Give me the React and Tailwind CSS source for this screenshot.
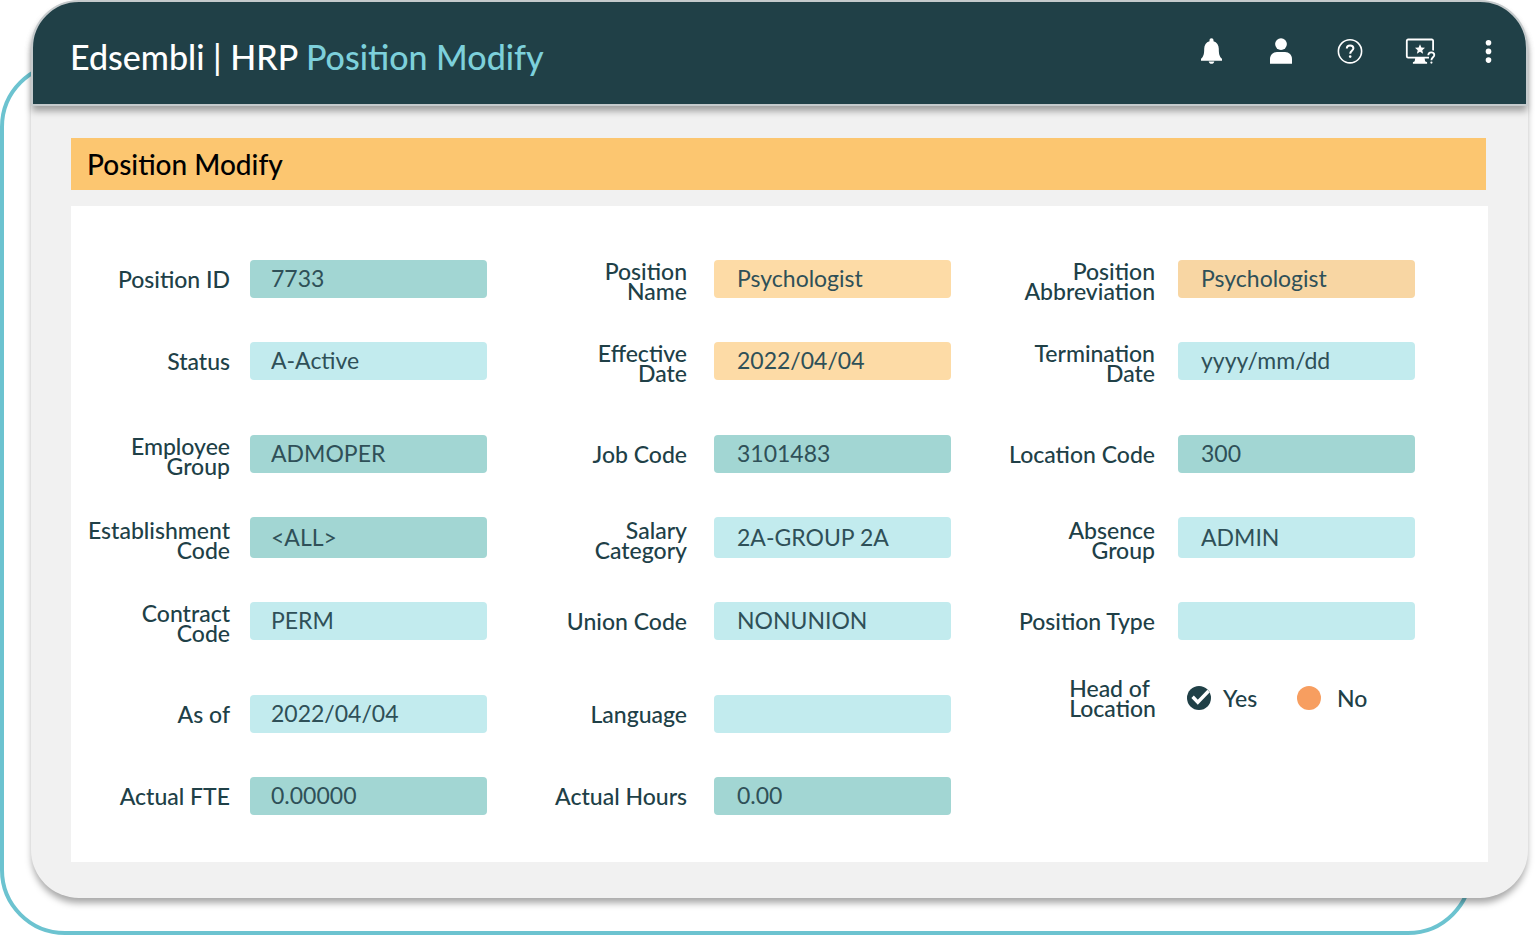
import React from "react";

const TONES = {
  locked: "bg-[#a2d6d3]",
  open: "bg-[#c2ebee]",
  required: "bg-[#fddba6]",
  muted: "bg-[#f8d6a3]",
};

const COLUMNS = [
  {
    labelGap: "gap-[20px]",
    inset: "pl-[21px]",
    fields: [
      { label: "Position ID", value: "7733", tone: "locked" },
      { label: "Status", value: "A-Active", tone: "open" },
      { label: "Employee Group", value: "ADMOPER", tone: "locked" },
      { label: "Establishment Code", value: "<ALL>", tone: "locked" },
      { label: "Contract Code", value: "PERM", tone: "open" },
      { label: "As of", value: "2022/04/04", tone: "open" },
      { label: "Actual FTE", value: "0.00000", tone: "locked" },
    ],
  },
  {
    labelGap: "gap-[27px]",
    inset: "pl-[23px]",
    fields: [
      { label: "Position Name", value: "Psychologist", tone: "required" },
      { label: "Effective Date", value: "2022/04/04", tone: "required" },
      { label: "Job Code", value: "3101483", tone: "locked" },
      { label: "Salary Category", value: "2A-GROUP 2A", tone: "open" },
      { label: "Union Code", value: "NONUNION", tone: "open" },
      { label: "Language", value: "", tone: "open" },
      { label: "Actual Hours", value: "0.00", tone: "locked" },
    ],
  },
  {
    labelGap: "gap-[23px]",
    inset: "pl-[23px]",
    fields: [
      { label: "Position Abbreviation", value: "Psychologist", tone: "muted" },
      { label: "Termination Date", value: "", placeholder: "yyyy/mm/dd", tone: "open" },
      { label: "Location Code", value: "300", tone: "locked" },
      { label: "Absence Group", value: "ADMIN", tone: "open" },
      { label: "Position Type", value: "", tone: "open" },
    ],
  },
];

const STACKED = [
  "Position Name",
  "Position Abbreviation",
  "Effective Date",
  "Termination Date",
  "Employee Group",
  "Establishment Code",
  "Salary Category",
  "Absence Group",
  "Contract Code",
];

// Rows come in three groups: 1-2, 3-5 and 6-7.
const ROW_CLASSES = [
  "h-[38px]",
  "mt-[44px] h-[38px]",
  "mt-[55px] h-[38px]",
  "mt-[44px] h-[41px]",
  "mt-[44px] h-[38px]",
  "mt-[55px] h-[38px]",
  "mt-[44px] h-[38px]",
];

function LabelText({ text }) {
  if (!STACKED.includes(text)) return text;
  const [first, second] = text.split(" ");
  return (
    <span className="block pt-1">
      {first}
      <br />
      {second}
    </span>
  );
}

function Field({ field, row, labelGap, inset }) {
  const id = field.label.toLowerCase().replace(/ /g, "-");
  return (
    <div className={`flex items-center ${labelGap} ${ROW_CLASSES[row]}`}>
      <label htmlFor={id} className="flex-1 text-right text-[23px] leading-[20px] font-medium whitespace-nowrap">
        <LabelText text={field.label} />
      </label>
      <input
        id={id}
        type="text"
        defaultValue={field.value}
        placeholder={field.placeholder}
        className={`h-full w-[237px] rounded-[4px] pr-2 pb-[2px] text-[23px] text-[#2f5058] outline-none placeholder:text-[#2f5058] placeholder:opacity-100 focus-visible:ring-2 focus-visible:ring-[#6cc3d0] ${inset} ${TONES[field.tone]}`}
      />
    </div>
  );
}

function HeadOfLocation() {
  return (
    <div role="radiogroup" aria-labelledby="head-of-location" className="mt-[38px] flex h-[40px] items-center justify-end">
      <span id="head-of-location" className="mr-[31px] text-[23px] leading-[20px] font-medium">
        Head of
        <br />
        Location
      </span>
      <div className="flex w-[228px] items-center text-[23px] leading-[24px] font-medium">
        <label className="flex w-[110px] items-center gap-[12px]">
          <span className="relative flex size-6">
            <input type="radio" name="head" defaultChecked className="size-6 appearance-none rounded-full bg-[#204047]" />
            <svg viewBox="0 0 24 24" className="pointer-events-none absolute inset-0 size-6" fill="none" stroke="#fff" strokeWidth="3.4">
              <path d="M5.600 10.800l5.200 5.400L21.600 5" />
            </svg>
          </span>
          Yes
        </label>
        <label className="flex items-center gap-[16px]">
          <input type="radio" name="head" className="size-6 appearance-none rounded-full bg-[#f79e60]" />
          No
        </label>
      </div>
    </div>
  );
}

const ICONS = [
  {
    name: "Notifications",
    art: (
      <g fill="#fff">
        <path d="M13.500 1.200c1.200 0 2 .9 2 2v1c3.400.9 5.300 3.800 5.300 7.500 0 4.800.5 7.600 3.200 10.100v1.900H3v-1.900c2.700-2.500 3.200-5.300 3.200-10.100 0-3.700 1.900-6.600 5.300-7.500v-1c0-1.100.8-2 2-2z" />
        <path d="M10.700 24.500h5.600c-.3 1.400-1.400 2.300-2.800 2.300s-2.500-.9-2.800-2.300z" />
      </g>
    ),
  },
  {
    name: "Account",
    art: (
      <g fill="#fff">
        <circle cx="14" cy="7.100" r="5.900" />
        <path d="M3 26.700v-4.700c0-4.200 3-7.100 7-7.100h8c4 0 7 2.900 7 7.100v4.700z" />
      </g>
    ),
  },
  {
    name: "Help",
    art: (
      <g fill="none" stroke="#fff">
        <circle cx="14" cy="14.300" r="11.600" strokeWidth="1.600" />
        <path d="M10.800 11.600c0-2 1.400-3.200 3.300-3.200s3.300 1.200 3.300 2.900c0 2.400-3.200 2.600-3.200 5.400" strokeWidth="2" />
        <circle cx="14.200" cy="19.600" r="1.300" fill="#fff" stroke="none" />
      </g>
    ),
  },
  {
    name: "Guided tour",
    art: (
      <g>
        <path d="M24 20.600H3.100a1.300 1.300 0 0 1-1.300-1.300V3.800a1.300 1.300 0 0 1 1.300-1.300h23.700a1.300 1.300 0 0 1 1.300 1.300v11" fill="none" stroke="#fff" strokeWidth="1.800" />
        <path d="M10.300 20.600h9.200l.6 3.600 2 1v1.500H7.900v-1.500l1.800-1z" fill="#fff" />
        <path d="M15 7.200l1.400 3.300 3.600.3-2.700 2.400.8 3.500-3.100-1.900-3.100 1.900.8-3.500-2.700-2.400 3.600-.3z" fill="#fff" />
        <path d="M23.300 18.300c0-1.900 1.200-3 3-3s3 1.100 3 2.700c0 2.200-2.900 2.400-2.900 5.200" fill="none" stroke="#204047" strokeWidth="4" />
        <path d="M23.300 18.300c0-1.900 1.200-3 3-3s3 1.100 3 2.700c0 2.200-2.900 2.400-2.900 5.200" fill="none" stroke="#fff" strokeWidth="1.800" />
        <circle cx="26.400" cy="25.600" r="1.100" fill="#fff" />
      </g>
    ),
  },
  {
    name: "More",
    art: (
      <g fill="#fff">
        <circle cx="14.500" cy="5.700" r="2.800" />
        <circle cx="14.500" cy="14.400" r="2.800" />
        <circle cx="14.500" cy="23.100" r="2.800" />
      </g>
    ),
  },
];

export default function App() {
  return (
    <div className="relative isolate min-h-screen bg-white pr-2 pb-[37px] pl-[31px] font-['Lato',sans-serif] text-[#204047]">
      <div aria-hidden="true" className="absolute top-[62px] right-[63px] bottom-0 left-0 -z-10 rounded-[65px] border-4 border-[#6cc3d0]" />
      <main className="rounded-[48px] bg-[#f1f1f1] pb-[36px] shadow-[0_6px_7px_-1px_rgba(0,0,0,0.35)]">
        <header className="flex items-start justify-between rounded-t-[48px] border-2 border-[#c5cacc] bg-[#204047] pt-[35px] pr-[24px] pb-[27px] pl-[37px] shadow-[0_6px_7px_-1px_rgba(0,0,0,0.35)]">
          <h1 className="text-[34px] leading-[40px] font-medium whitespace-nowrap text-white">
            Edsembli | HRP <span className="text-[#7dd0db]">Position Modify</span>
          </h1>
          <nav aria-label="Tools" className="flex gap-[41px]">
            {ICONS.map((icon) => (
              <button key={icon.name} type="button" aria-label={icon.name} className="size-7">
                <svg viewBox="0 0 28 28" className="size-7 overflow-visible">
                  {icon.art}
                </svg>
              </button>
            ))}
          </nav>
        </header>

        <div className="px-10 pt-[32px]">
          <h2 className="mr-[2px] bg-[#fcc670] px-4 text-[28px] leading-[52px] font-medium text-black">Position Modify</h2>
          <form className="mt-4 grid grid-cols-[416fr_464fr_464fr] bg-white pt-[54px] pr-[73px] pb-[47px]">
            {COLUMNS.map((column, index) => (
              <div key={index}>
                {column.fields.map((field, row) => (
                  <Field key={field.label} field={field} row={row} labelGap={column.labelGap} inset={column.inset} />
                ))}
                {index === 2 && <HeadOfLocation />}
              </div>
            ))}
          </form>
        </div>
      </main>
    </div>
  );
}
